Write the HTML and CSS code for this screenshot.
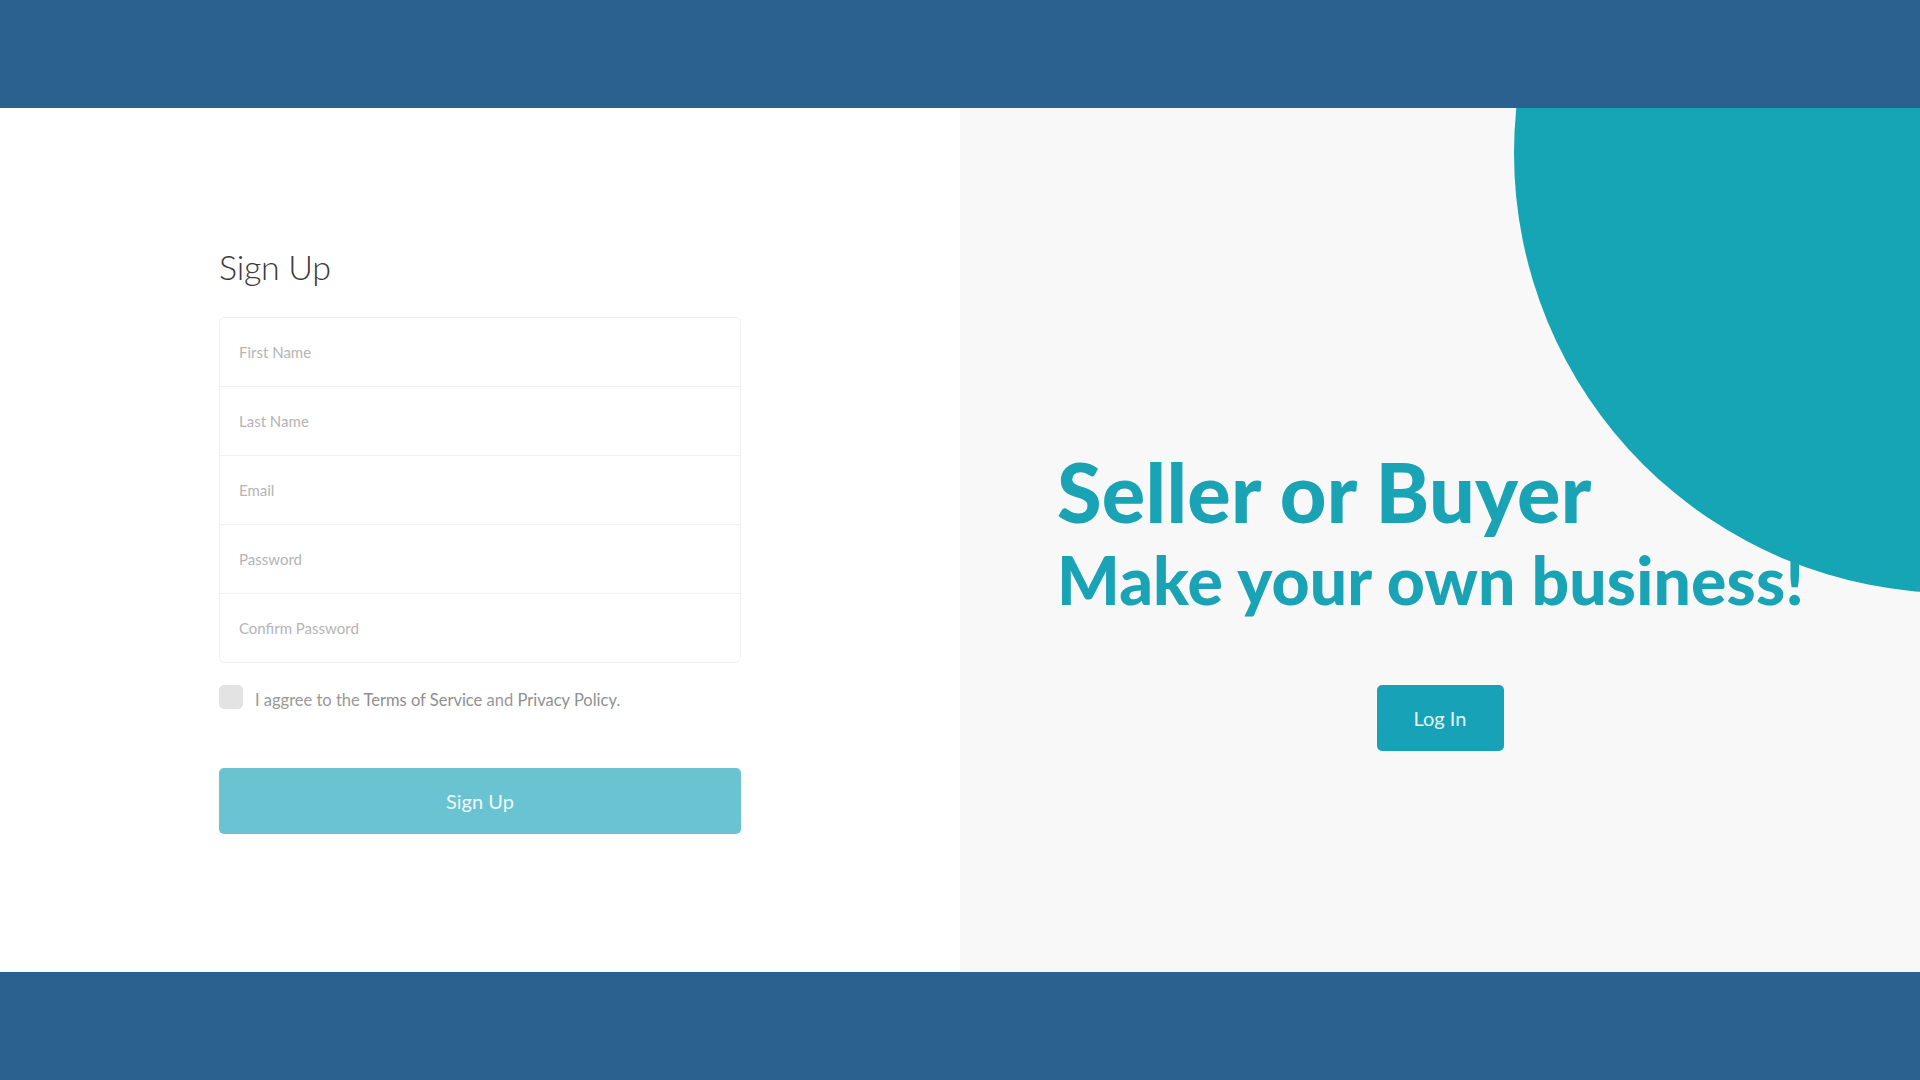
FILE: index.html
```html
<!DOCTYPE html>
<html lang="en">
<head>
<meta charset="utf-8">
<title>Sign Up</title>
<link rel="stylesheet" href="styles.css">
</head>
<body>
<header class="topbar"></header>
<main class="split">
  <section class="left">
    <div class="form-wrap">
      <h1 class="title">Sign Up</h1>
      <div class="fields">
        <input class="field" type="text" placeholder="First Name">
        <input class="field" type="text" placeholder="Last Name">
        <input class="field" type="email" placeholder="Email">
        <input class="field" type="password" placeholder="Password">
        <input class="field" type="password" placeholder="Confirm Password">
      </div>
      <label class="agree">
        <input class="check" type="checkbox">
        <span class="agree-text">I aggree to the <span class="link">Terms of Service</span> and <span class="link">Privacy Policy</span>.</span>
      </label>
      <button class="btn-signup" type="button">Sign Up</button>
    </div>
  </section>
  <section class="right">
    <div class="circle"></div>
    <div class="brand">
      <h2 class="brand-1">Seller or Buyer</h2>
      <h3 class="brand-2">Make your own business!</h3>
    </div>
    <div class="login-row">
      <button class="btn-login" type="button">Log In</button>
    </div>
  </section>
</main>
<footer class="bottombar"></footer>
</body>
</html>
```
FILE: styles.css
```css
* { box-sizing: border-box; }
html, body { margin: 0; padding: 0; }
body {
  width: 1920px;
  height: 1080px;
  overflow: hidden;
  font-family: "Lato", "Liberation Sans", sans-serif;
  background: #ffffff;
}
.topbar, .bottombar {
  height: 108px;
  background: #2a618f;
}
.split {
  height: 864px;
  display: grid;
  grid-template-columns: 960px 960px;
}
.left {
  background: #ffffff;
  display: flex;
  justify-content: center;
  padding-top: 137px;
}
.form-wrap {
  width: 522px;
  display: flex;
  flex-direction: column;
}
.title {
  margin: 0;
  font-size: 34px;
  line-height: 44px;
  font-weight: 300;
  color: #3a3a3a;
  letter-spacing: -0.3px;
}
.fields {
  margin-top: 28px;
  border: 1px solid #eeeeee;
  border-radius: 6px;
  display: flex;
  flex-direction: column;
  overflow: hidden;
}
.field {
  height: 69px;
  border: none;
  border-top: 1px solid #f0f0f0;
  padding: 0 19px;
  font-family: "Lato", "Liberation Sans", sans-serif;
  font-size: 15px;
  font-weight: 400;
  color: #555;
  background: #ffffff;
  outline: none;
}
.field:first-child { border-top: none; height: 68px; }
.field::placeholder { color: #b4b4b4; }
.agree {
  margin-top: 21px;
  display: flex;
  align-items: center;
  gap: 12px;
}
.check {
  appearance: none;
  -webkit-appearance: none;
  margin: 0;
  width: 24px;
  height: 24px;
  border-radius: 5px;
  background: #e3e3e3;
  border: none;
}
.agree-text {
  font-size: 16.5px;
  color: #999999;
  padding-top: 6px;
}
.link { color: #8f8f8f; }
.btn-signup {
  margin-top: 58px;
  height: 66px;
  border: none;
  border-radius: 5px;
  background: #6ac3d1;
  color: #eef8fa;
  font-family: "Lato", "Liberation Sans", sans-serif;
  font-size: 20px;
  font-weight: 400;
}
.right {
  position: relative;
  overflow: hidden;
  background: #f8f8f9;
  padding-top: 343px;
}
.circle {
  position: absolute;
  left: 554px;
  top: -395px;
  width: 880px;
  height: 880px;
  border-radius: 50%;
  background: #16a5b5;
}
.brand {
  position: relative;
  padding-left: 97px;
  color: #19a3b5;
}
.brand-1 {
  margin: 0;
  font-size: 81px;
  line-height: 81px;
  font-weight: 900;
  letter-spacing: 0.3px;
}
.brand-2 {
  margin: 15px 0 0;
  font-size: 66px;
  line-height: 66px;
  font-weight: 900;
  letter-spacing: 0.15px;
}
.login-row {
  position: relative;
  margin-top: 72px;
  display: flex;
  justify-content: center;
}
.btn-login {
  width: 127px;
  height: 66px;
  border: none;
  border-radius: 5px;
  background: #17a2b8;
  color: #e6f6f8;
  font-family: "Lato", "Liberation Sans", sans-serif;
  font-size: 20px;
  font-weight: 400;
}
```
